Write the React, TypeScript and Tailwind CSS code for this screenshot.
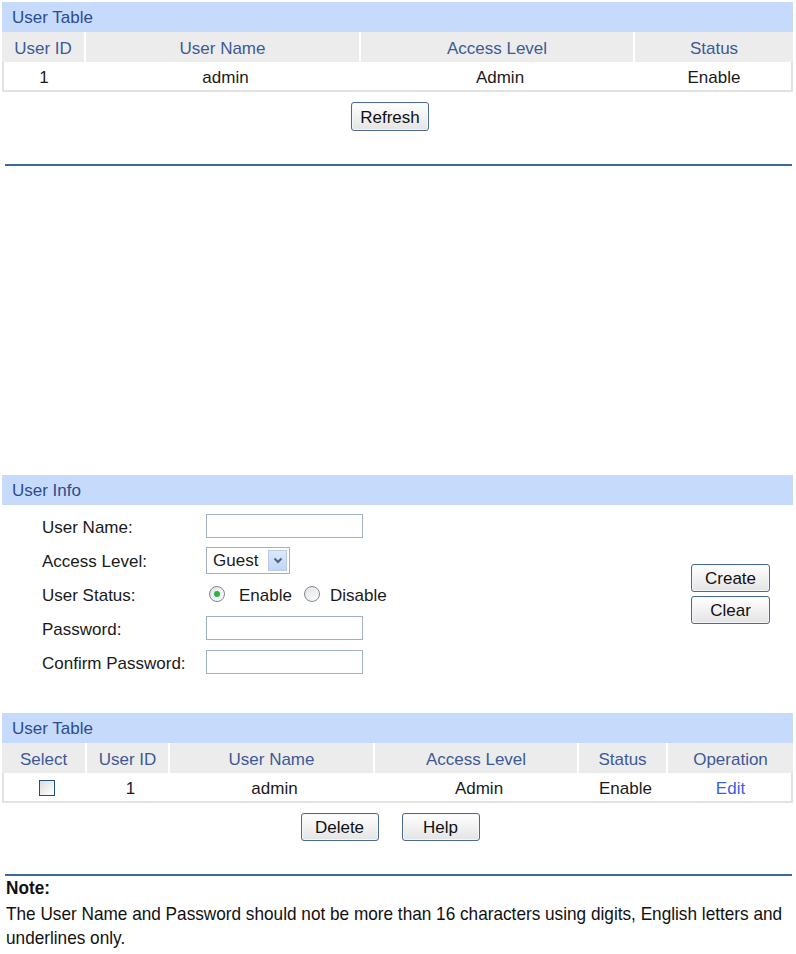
import React from "react";

const font = { fontFamily: '"Liberation Sans", Arial, sans-serif' };

function Btn({ label, w = "w-[78px]", h = "h-[29px]" }: { label: string; w?: string; h?: string }) {
  return (
    <div
      className={`${w} ${h} flex items-center justify-center pt-[2px] rounded-[3px] border border-[#4a6a92] bg-gradient-to-b from-white to-[#e4e4e4] text-[17px] text-[#111] shadow-[inset_0_0_0_1px_#f4f6f9]`}
    >
      {label}
    </div>
  );
}

function Radio({ checked }: { checked?: boolean }) {
  return (
    <div className="w-[16px] h-[16px] rounded-full border border-[#7d8894] bg-gradient-to-br from-[#e2e2e2] to-white flex items-center justify-center">
      {checked && <div className="w-[6px] h-[6px] rounded-full bg-[#2bb34a]" />}
    </div>
  );
}

function SectionHeader({ title }: { title: string }) {
  return (
    <div className="h-[30px] bg-[#c6dafc] flex items-center pt-[2px] pl-[10px] text-[17px] text-[#2f4c8c]">{title}</div>
  );
}

function Input() {
  return <div className="w-[157px] h-[24px] border border-[#9fb0c4] bg-white" />;
}

const cell = "flex items-center justify-center pt-[3px]";
const hcell = "flex items-center justify-center pt-[3px] border-r-2 border-white";

export default function App() {
  return (
    <div className="w-[796px] h-[954px] bg-white pt-[2px] pl-[2px] pr-[3px] overflow-hidden" style={font}>
      {/* Table 1 */}
      <SectionHeader title="User Table" />
      <div className="grid grid-cols-[84px_275px_274px_1fr] h-[30px] bg-[#ececec] text-[17px] text-[#3d5a96]">
        <div className={hcell}>User ID</div>
        <div className={hcell}>User Name</div>
        <div className={hcell}>Access Level</div>
        <div className={cell}>Status</div>
      </div>
      <div className="grid grid-cols-[84px_275px_274px_1fr] h-[30px] border-x-2 border-b-2 border-[#e2e2e2] text-[17px] text-[#1a1a1a]">
        <div className={`${cell} pr-[4px]`}>1</div>
        <div className={cell}>admin</div>
        <div className={cell}>Admin</div>
        <div className={cell}>Enable</div>
      </div>
      <div className="mt-[10px] flex justify-center pr-[15px]">
        <Btn label="Refresh" />
      </div>
      <div className="mt-[33px] ml-[3px] mr-[1px] h-[2px] bg-[#3a6a9c]" />

      {/* User Info */}
      <div className="mt-[309px]">
        <SectionHeader title="User Info" />
      </div>
      <div className="flex items-center pt-[4px]">
        <div className="flex flex-col pl-[40px] text-[17px] text-[#1a1a1a]">
          <div className="h-[34px] flex items-center">
            <div className="w-[164px] pt-[3px]">User Name:</div>
            <Input />
          </div>
          <div className="h-[34px] flex items-center">
            <div className="w-[164px] pt-[3px]">Access Level:</div>
            <div className="w-[84px] h-[27px] border border-[#9fb0c4] bg-white flex items-center justify-between pl-[6px] pr-[2px]">
              <span className="pt-[2px]">Guest</span>
              <div className="w-[19px] h-[21px] bg-gradient-to-b from-[#dce8fb] to-[#c2d6f6] border border-[#b8cce8] flex items-center justify-center">
                <svg width="10" height="7" viewBox="0 0 10 7">
                  <path d="M1.5 1.5 L5 5 L8.5 1.5" stroke="#4d6185" strokeWidth="2" fill="none" />
                </svg>
              </div>
            </div>
          </div>
          <div className="h-[34px] flex items-center">
            <div className="w-[167px] pt-[3px]">User Status:</div>
            <Radio checked />
            <span className="ml-[14px] pt-[3px]">Enable</span>
            <div className="ml-[12px]">
              <Radio />
            </div>
            <span className="ml-[10px] pt-[3px]">Disable</span>
          </div>
          <div className="h-[34px] flex items-center">
            <div className="w-[164px] pt-[3px]">Password:</div>
            <Input />
          </div>
          <div className="h-[34px] flex items-center">
            <div className="w-[164px] pt-[3px]">Confirm Password:</div>
            <Input />
          </div>
        </div>
        <div className="ml-auto mr-[23px] flex flex-col gap-[4px]">
          <Btn label="Create" w="w-[79px]" h="h-[28px]" />
          <Btn label="Clear" w="w-[79px]" h="h-[28px]" />
        </div>
      </div>

      {/* Table 2 */}
      <div className="mt-[34px]">
        <SectionHeader title="User Table" />
      </div>
      <div className="grid grid-cols-[85px_83px_205px_204px_89px_1fr] h-[30px] bg-[#ececec] text-[17px] text-[#3d5a96]">
        <div className={hcell}>Select</div>
        <div className={hcell}>User ID</div>
        <div className={hcell}>User Name</div>
        <div className={hcell}>Access Level</div>
        <div className={hcell}>Status</div>
        <div className={cell}>Operation</div>
      </div>
      <div className="grid grid-cols-[85px_83px_205px_204px_89px_1fr] h-[30px] border-x-2 border-b-2 border-[#e2e2e2] text-[17px] text-[#1a1a1a]">
        <div className="flex items-center justify-center pt-[1px]">
          <div className="w-[16px] h-[16px] border border-[#1e4f7d] bg-gradient-to-br from-[#dcdcdc] to-white" />
        </div>
        <div className={cell}>1</div>
        <div className={cell}>admin</div>
        <div className={cell}>Admin</div>
        <div className={cell}>Enable</div>
        <div className={`${cell} text-[#3d5fe0]`}>Edit</div>
      </div>
      <div className="mt-[10px] flex justify-center gap-[23px] pr-[15px]">
        <Btn label="Delete" h="h-[28px]" />
        <Btn label="Help" h="h-[28px]" />
      </div>
      <div className="mt-[33px] ml-[3px] mr-[1px] h-[2px] bg-[#3a6a9c]" />

      {/* Note */}
      <div className="pl-[4px] text-[#111]">
        <div className="w-[870px] origin-left scale-x-[0.905] text-[19px]">
          <div className="h-[24px] flex items-center pt-[1px] font-bold">Note:</div>
          <div className="leading-[24px] pt-[2px]">
            The User Name and Password should not be more than 16 characters using digits, English letters and underlines only.
          </div>
        </div>
      </div>
    </div>
  );
}
